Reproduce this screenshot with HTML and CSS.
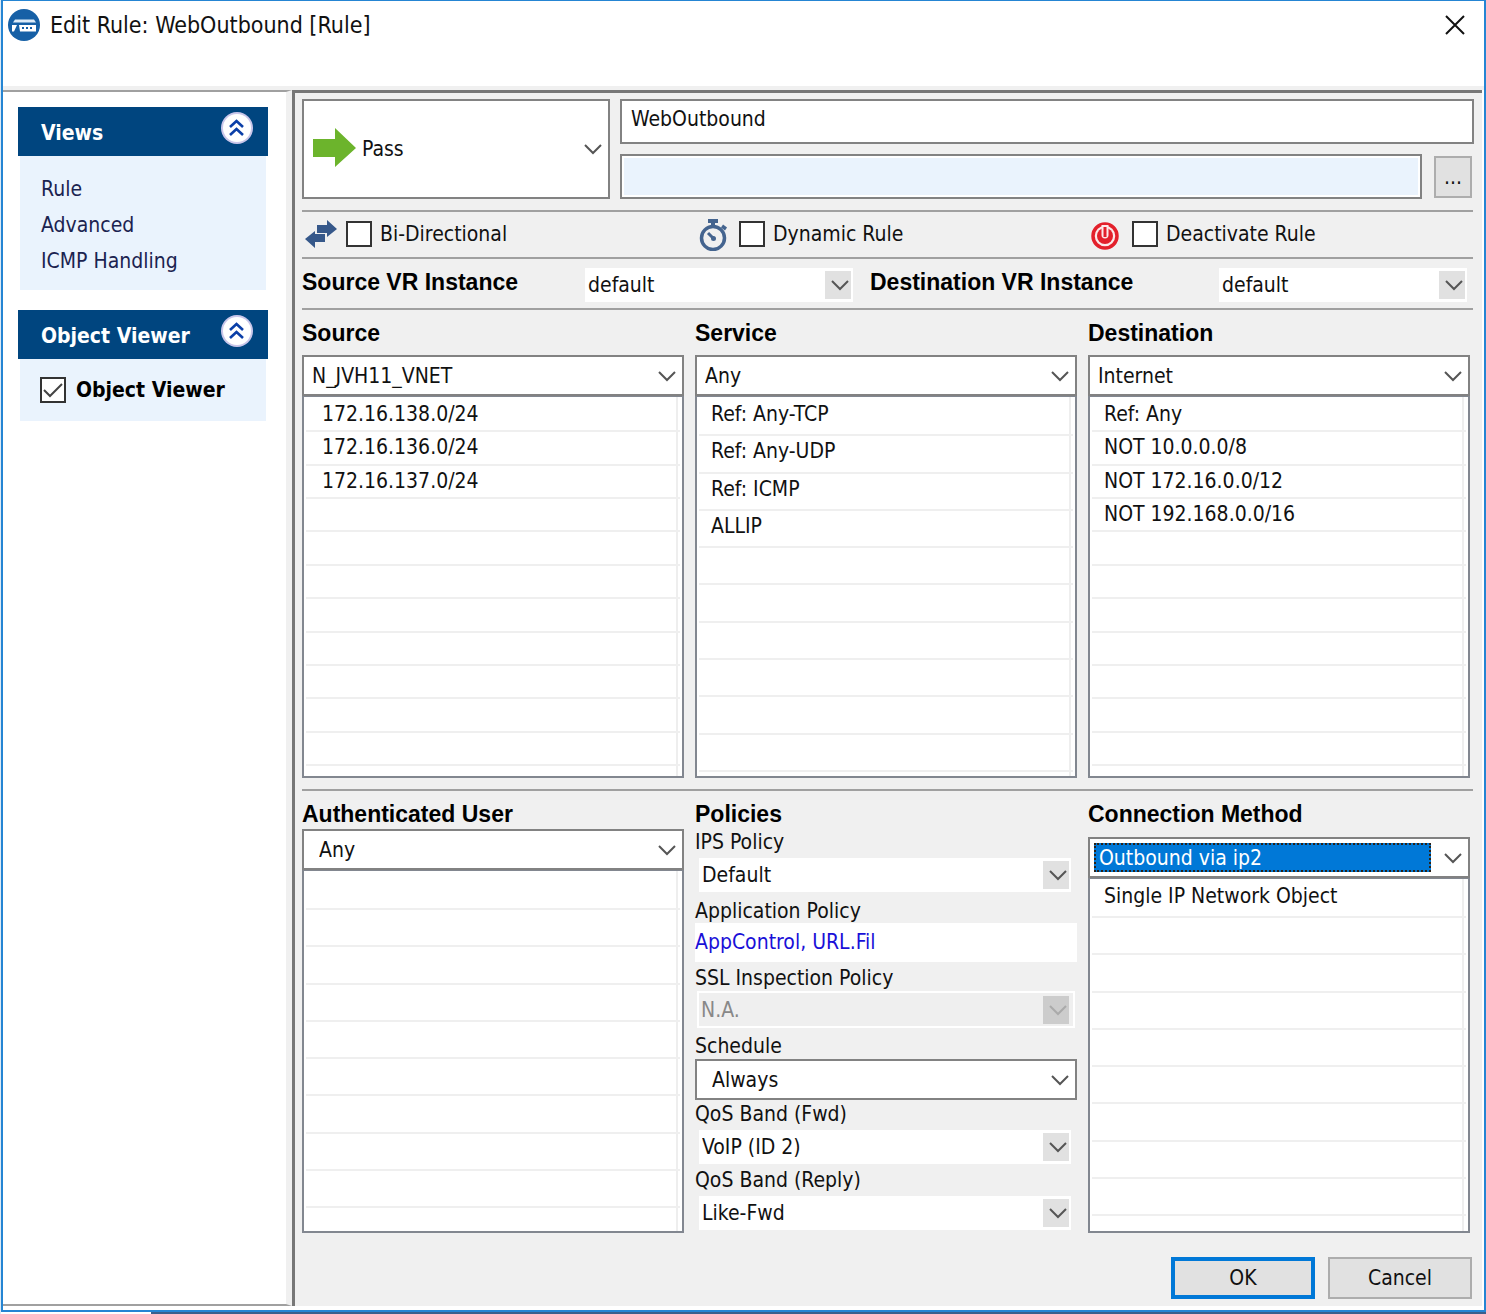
FILE: index.html
```html
<!DOCTYPE html>
<html lang="en">
<head>
<meta charset="utf-8">
<meta name="viewport" content="width=device-width, initial-scale=1">
<title>Edit Rule: WebOutbound [Rule]</title>
<link rel="stylesheet" href="styles.css">
</head>
<body>
<svg class="defs" aria-hidden="true">
  <symbol id="chevron" viewBox="0 0 18 12"><path d="M1 2l8 8 8-8" fill="none" stroke="currentColor" stroke-width="2"/></symbol>
  <symbol id="collapse" viewBox="0 0 34 34">
    <circle cx="17" cy="17" r="16" fill="#c9c6ea"/><circle cx="17" cy="17" r="14" fill="#fff"/>
    <path d="M10 16l6.500-6 6.500 6M10 24l6.500-6 6.500 6" fill="none" stroke="#0b3fa8" stroke-width="2.6"/>
  </symbol>
</svg>
<div class="dialog">
  <header class="titlebar">
    <svg class="app-icon" viewBox="0 0 32 32" aria-hidden="true">
      <circle cx="16" cy="16" r="16" fill="#1660a6"/>
      <path d="M7 10.500h19l2 3H5z" fill="#dcebf8"/>
      <path d="M11 16h17v6.500H12zM4 16h5l-3 6.500H4z" fill="#fff"/>
      <path d="M14 18h2v2h-2zM18 18h2v2h-2zM22 18h2v2h-2z" fill="#1660a6"/>
    </svg>
    <h1 class="title">Edit Rule: WebOutbound [Rule]</h1>
    <button class="close" type="button" aria-label="Close"><svg viewBox="0 0 22 22"><path d="M2 2l18 18M20 2L2 20" stroke="#111" stroke-width="2"/></svg></button>
  </header>
  <div class="body">
    <aside class="sidebar">
      <section class="panel">
        <div class="panel-head"><h2>Views</h2><button type="button" aria-label="Collapse Views"><svg><use href="#collapse"/></svg></button></div>
        <nav class="panel-body">
          <a href="#rule">Rule</a>
          <a href="#advanced">Advanced</a>
          <a href="#icmp">ICMP Handling</a>
        </nav>
      </section>
      <section class="panel">
        <div class="panel-head"><h2>Object Viewer</h2><button type="button" aria-label="Collapse Object Viewer"><svg><use href="#collapse"/></svg></button></div>
        <div class="panel-body viewer">
          <label class="check"><input type="checkbox" checked>Object Viewer</label>
        </div>
      </section>
    </aside>
    <main class="main">
      <div class="top">
        <div class="combo action">
          <select aria-label="Action"><option>Pass</option></select>
          <svg class="pass" viewBox="0 0 44 40" aria-hidden="true"><path d="M0 11h22V0l21 20-21 19V29H0z" fill="#6cb42c"/></svg>
          <svg class="chev"><use href="#chevron"/></svg>
        </div>
        <div class="names">
          <input type="text" aria-label="Rule name" value="WebOutbound">
          <div class="comment">
            <input class="tinted" type="text" aria-label="Comment">
            <button type="button" aria-label="More">...</button>
          </div>
        </div>
      </div>
      <div class="toggles">
        <div class="toggle">
          <svg viewBox="0 0 32 30" aria-hidden="true"><path d="M12 5h10V0l10 9-10 8v-4H12zM20 14v8H10v6L0 19l10-8v3z" fill="#36588a"/></svg>
          <label class="check"><input type="checkbox">Bi-Directional</label>
        </div>
        <div class="toggle">
          <svg viewBox="0 0 32 32" aria-hidden="true"><g fill="none" stroke="#44648f"><circle cx="15" cy="19" r="11.5" stroke-width="3.5"/><path d="M10 2h10M15 2v5" stroke-width="4"/><path d="M24 7l4 3" stroke-width="3.5"/><path d="M10 14l5 5" stroke-width="3"/></g><circle cx="15.500" cy="19.500" r="2.500" fill="#44648f"/></svg>
          <label class="check"><input type="checkbox">Dynamic Rule</label>
        </div>
        <div class="toggle">
          <svg viewBox="0 0 32 32" aria-hidden="true"><circle cx="14" cy="17" r="12" fill="#fbe9ea" stroke="#e3202b" stroke-width="3.500"/><circle cx="14" cy="17" r="8" fill="#e3202b"/><path d="M10.500 6h7v10a3.500 3.500 0 0 1-7 0z" fill="#fbe9ea"/><path d="M14 8v10" stroke="#e3202b" stroke-width="3"/></svg>
          <label class="check"><input type="checkbox">Deactivate Rule</label>
        </div>
      </div>
      <div class="vr">
        <label class="heading" for="svr">Source VR Instance</label>
        <div class="combo flat"><select id="svr"><option>default</option></select><svg class="chev"><use href="#chevron"/></svg></div>
        <label class="heading" for="dvr">Destination VR Instance</label>
        <div class="combo flat"><select id="dvr"><option>default</option></select><svg class="chev"><use href="#chevron"/></svg></div>
      </div>
      <div class="columns upper">
        <section class="column">
          <label class="heading" for="src">Source</label>
          <div class="combo"><select id="src"><option>N_JVH11_VNET</option></select><svg class="chev"><use href="#chevron"/></svg></div>
          <ul class="list far"><li>172.16.138.0/24</li><li>172.16.136.0/24</li><li>172.16.137.0/24</li><li></li><li></li><li></li><li></li><li></li><li></li><li></li><li></li></ul>
        </section>
        <section class="column">
          <label class="heading" for="svc">Service</label>
          <div class="combo"><select id="svc"><option>Any</option></select><svg class="chev"><use href="#chevron"/></svg></div>
          <ul class="list short"><li>Ref: Any-TCP</li><li>Ref: Any-UDP</li><li>Ref: ICMP</li><li>ALLIP</li><li></li><li></li><li></li><li></li><li></li><li></li></ul>
        </section>
        <section class="column">
          <label class="heading" for="dst">Destination</label>
          <div class="combo"><select id="dst"><option>Internet</option></select><svg class="chev"><use href="#chevron"/></svg></div>
          <ul class="list"><li>Ref: Any</li><li>NOT 10.0.0.0/8</li><li>NOT 172.16.0.0/12</li><li>NOT 192.168.0.0/16</li><li></li><li></li><li></li><li></li><li></li><li></li><li></li></ul>
        </section>
      </div>
      <div class="columns lower">
        <section class="column auth">
          <label class="heading" for="usr">Authenticated User</label>
          <div class="combo inset"><select id="usr"><option>Any</option></select><svg class="chev"><use href="#chevron"/></svg></div>
          <ul class="list"><li></li><li></li><li></li><li></li><li></li><li></li><li></li><li></li><li></li></ul>
        </section>
        <section class="policies">
          <h2 class="heading">Policies</h2>
          <label for="ips">IPS Policy</label>
          <div class="combo flat"><select id="ips"><option>Default</option></select><svg class="chev"><use href="#chevron"/></svg></div>
          <span class="caption">Application Policy</span>
          <a class="app-policy" href="#application-policy">AppControl, URL.Fil</a>
          <label for="ssl">SSL Inspection Policy</label>
          <div class="combo flat off"><select id="ssl" disabled><option>N.A.</option></select><svg class="chev"><use href="#chevron"/></svg></div>
          <label for="sch">Schedule</label>
          <div class="combo inset"><select id="sch"><option>Always</option></select><svg class="chev"><use href="#chevron"/></svg></div>
          <label for="qf">QoS Band (Fwd)</label>
          <div class="combo flat"><select id="qf"><option>VoIP (ID 2)</option></select><svg class="chev"><use href="#chevron"/></svg></div>
          <label for="qr">QoS Band (Reply)</label>
          <div class="combo flat"><select id="qr"><option>Like-Fwd</option></select><svg class="chev"><use href="#chevron"/></svg></div>
        </section>
        <section class="column">
          <label class="heading" for="con">Connection Method</label>
          <div class="combo selected"><select id="con"><option>Outbound via ip2</option></select><svg class="chev"><use href="#chevron"/></svg></div>
          <ul class="list"><li>Single IP Network Object</li><li></li><li></li><li></li><li></li><li></li><li></li><li></li><li></li></ul>
        </section>
      </div>
      <footer class="actions">
        <button class="primary" type="submit">OK</button>
        <button type="button">Cancel</button>
      </footer>
    </main>
  </div>
</div>
</body>
</html>
```
FILE: styles.css
```css
* { box-sizing: border-box; }

body {
  margin: 0;
  min-height: 100vh;
  display: flex;
  padding: 0 0 2px 1px;
  background: linear-gradient(to right, #dbe9f5 1px, #fff 1px, #fff 151px, #3a5f8c 151px);
  font: 21px/24px "DejaVu Sans Condensed", "Noto Sans", sans-serif;
  color: #111;
}

input, select, button { font: inherit; color: inherit; margin: 0; border-radius: 0; }
h1, h2, ul { margin: 0; padding: 0; font: inherit; list-style: none; }
a { color: inherit; text-decoration: none; }
.defs { position: absolute; width: 0; height: 0; }

.dialog {
  flex: 1;
  display: flex;
  flex-direction: column;
  min-width: 0;
  border: 2px solid #2585d3;
  border-top-width: 1px;
  background: #fff;
}

.titlebar {
  display: flex;
  align-items: flex-start;
  height: 89px;
  padding: 8px 18px 0 5px;
  border-bottom: 4px solid #f0f0f0;
}
.app-icon { width: 32px; height: 32px; }
.title { flex: 1; padding: 4px 10px; font-size: 23px; }
.close { padding: 5px 0 0; border: 0; background: none; }
.close svg { display: block; width: 22px; height: 22px; }

.body { flex: 1; display: flex; padding: 0 2px 4px 0; }

.sidebar {
  width: 289px;
  display: flex;
  flex-direction: column;
  gap: 20px;
  padding: 15px 18px 15px 15px;
  border: solid #a0a0a0;
  border-width: 2px 0;
  border-right: 6px solid #f0f0f0;
}
.panel-head {
  display: flex;
  justify-content: space-between;
  align-items: flex-start;
  height: 49px;
  padding: 4px 14px 0 23px;
  background: #00457f;
  color: #fff;
}
.panel-head h2 { padding-top: 10px; font-weight: bold; }
.panel-head button { padding: 0; border: 0; background: none; }
.panel-head svg { display: block; width: 34px; height: 34px; }
.panel-body {
  display: flex;
  flex-direction: column;
  gap: 12px;
  margin: 0 2px;
  padding: 21px 20px 17px 21px;
  background: #eaf3fd;
  color: #1b2350;
}
.viewer { padding: 18px 20px; color: #000; font-weight: bold; }

.check { display: flex; align-items: center; gap: 8px; }
.check input {
  appearance: none;
  width: 26px;
  height: 26px;
  border: 2px solid #333;
  background: #fff;
}
.check input:checked {
  background: #fff url("data:image/svg+xml,%3Csvg xmlns='http://www.w3.org/2000/svg' viewBox='0 0 22 22'%3E%3Cpath d='M2 11l6 6L20 5' fill='none' stroke='%23444' stroke-width='2'/%3E%3C/svg%3E");
}
.viewer .check { gap: 10px; }

.main {
  flex: 1;
  min-width: 0;
  display: flex;
  flex-direction: column;
  padding: 6px 8px 7px 7px;
  border: solid #777;
  border-width: 3px 0 0 3px;
  background: #f0f0f0;
}

.top { display: flex; gap: 10px; padding-bottom: 11px; }
.action { flex: 0 0 308px; }
.names { flex: 1; display: flex; flex-direction: column; gap: 10px; }
.names input {
  width: 100%;
  height: 45px;
  padding: 0 9px 6px;
  border: 2px solid #828282;
  background: #fff;
}
.comment { display: flex; align-items: center; gap: 12px; padding-right: 2px; }
.comment .tinted { flex: 1; background: #eaf3fd; box-shadow: inset 0 0 0 2px #fff; }
.comment button { width: 38px; height: 42px; padding: 0; border: 2px solid #adadad; background: #e1e1e1; }

.combo { display: grid; height: 41px; }
.combo > * { grid-area: 1 / 1; }
.combo select {
  appearance: none;
  width: 100%;
  padding: 0 40px 0 8px;
  border: 2px solid #828282;
  background: #fff;
  opacity: 1;
}
.combo.inset select { padding-left: 15px; }
.combo.action { height: 100px; }
.combo.action select { padding-left: 58px; }
.chev {
  width: 18px;
  height: 12px;
  margin-right: 8px;
  place-self: center end;
  color: #555;
  pointer-events: none;
}
.pass { width: 44px; height: 40px; margin: 0 0 2px 11px; place-self: center start; pointer-events: none; }

.combo.flat { height: 34px; }
.combo.flat select { border: 0; padding-left: 3px; }
.combo.flat .chev {
  box-sizing: content-box;
  margin-right: 2px;
  padding: 8px 2px 8px 6px;
  background: #e1e1e1;
}
.combo.off select { border: 2px solid #fff; padding-left: 2px; background: #efefef; color: #888; }
.combo.flat.off .chev { margin-right: 6px; background: #ccc; color: #aaa; }

.toggles, .vr, .columns { border-top: 2px solid #a0a0a0; margin-right: 1px; }
.toggles { display: grid; grid-template-columns: repeat(3, 1fr); gap: 11px; height: 47px; padding-right: 3px; }
.toggle { display: flex; align-items: center; gap: 9px; padding-left: 3px; }
.toggle > svg { width: 32px; height: 32px; }
.toggle .check { padding-bottom: 1px; }

.heading { display: block; font: bold 23px/24px "Liberation Sans", Arial, sans-serif; color: #000; white-space: nowrap; }
.vr {
  display: grid;
  grid-template-columns: 283fr 285fr 349fr 248fr;
  height: 51px;
  padding: 9px 6px 0 0;
}
.vr .combo:nth-child(2) { margin-right: 17px; }
.vr .heading { padding-top: 2px; }

.columns { display: grid; grid-template-columns: repeat(3, 1fr); gap: 11px; padding: 11px 3px 11px 0; }
.column { display: flex; flex-direction: column; min-width: 0; }
.column .combo { margin-top: 10px; }
.lower .column .combo { margin-top: 11px; }
.lower .auth .combo { margin-top: 3px; }
.upper { flex: 1 0 481px; }
.lower { flex: 0 0 auto; padding-bottom: 24px; }

.list {
  flex: 1;
  display: flex;
  flex-direction: column;
  padding: 2px 2px 10px;
  border: 2px solid #828790;
  border-top-width: 1px;
  background: linear-gradient(#eee, #eee) right 4px top 0 / 2px 100% no-repeat #fff;
}
.list li { flex: 1 1 0; min-height: 33px; padding: 3px 12px 0; border-bottom: 2px solid #efefef; white-space: nowrap; overflow: hidden; }
.list.far li { padding-left: 16px; }
.list.short { padding-bottom: 4px; }
.lower .list { padding-bottom: 15px; }
.lower .auth .list { padding-bottom: 23px; }
.lower .list li { min-height: 36px; }

.policies { display: flex; flex-direction: column; }
.policies .heading { margin-bottom: 4px; }
.policies .flat { margin: 4px 6px 4px 4px; }
.policies .flat:last-child { margin-bottom: 3px; }
.policies .caption { margin-top: 3px; }
.app-policy { height: 39px; margin-bottom: 4px; padding-top: 7px; background: #fff; color: #1a10d8; }
.policies .off { height: 37px; margin: 1px 2px 6px; }
.policies .inset { margin: 1px 0 2px; }

.actions { display: flex; justify-content: flex-end; gap: 13px; padding-right: 2px; }
.actions button {
  width: 144px;
  height: 42px;
  padding: 0;
  border: 2px solid #adadad;
  background: #e1e1e1;
}
.actions .primary { border: 4px solid #0078d7; }

.selected select {
  padding-left: 9px;
  background: linear-gradient(#0078d7, #0078d7) 4px 4px / calc(100% - 41px) 29px no-repeat #fff;
  color: #fff;
}
.selected::after {
  content: "";
  grid-area: 1 / 1;
  margin: 6px 39px 6px 6px;
  border: 2px dotted #2b2218;
  pointer-events: none;
}
```
